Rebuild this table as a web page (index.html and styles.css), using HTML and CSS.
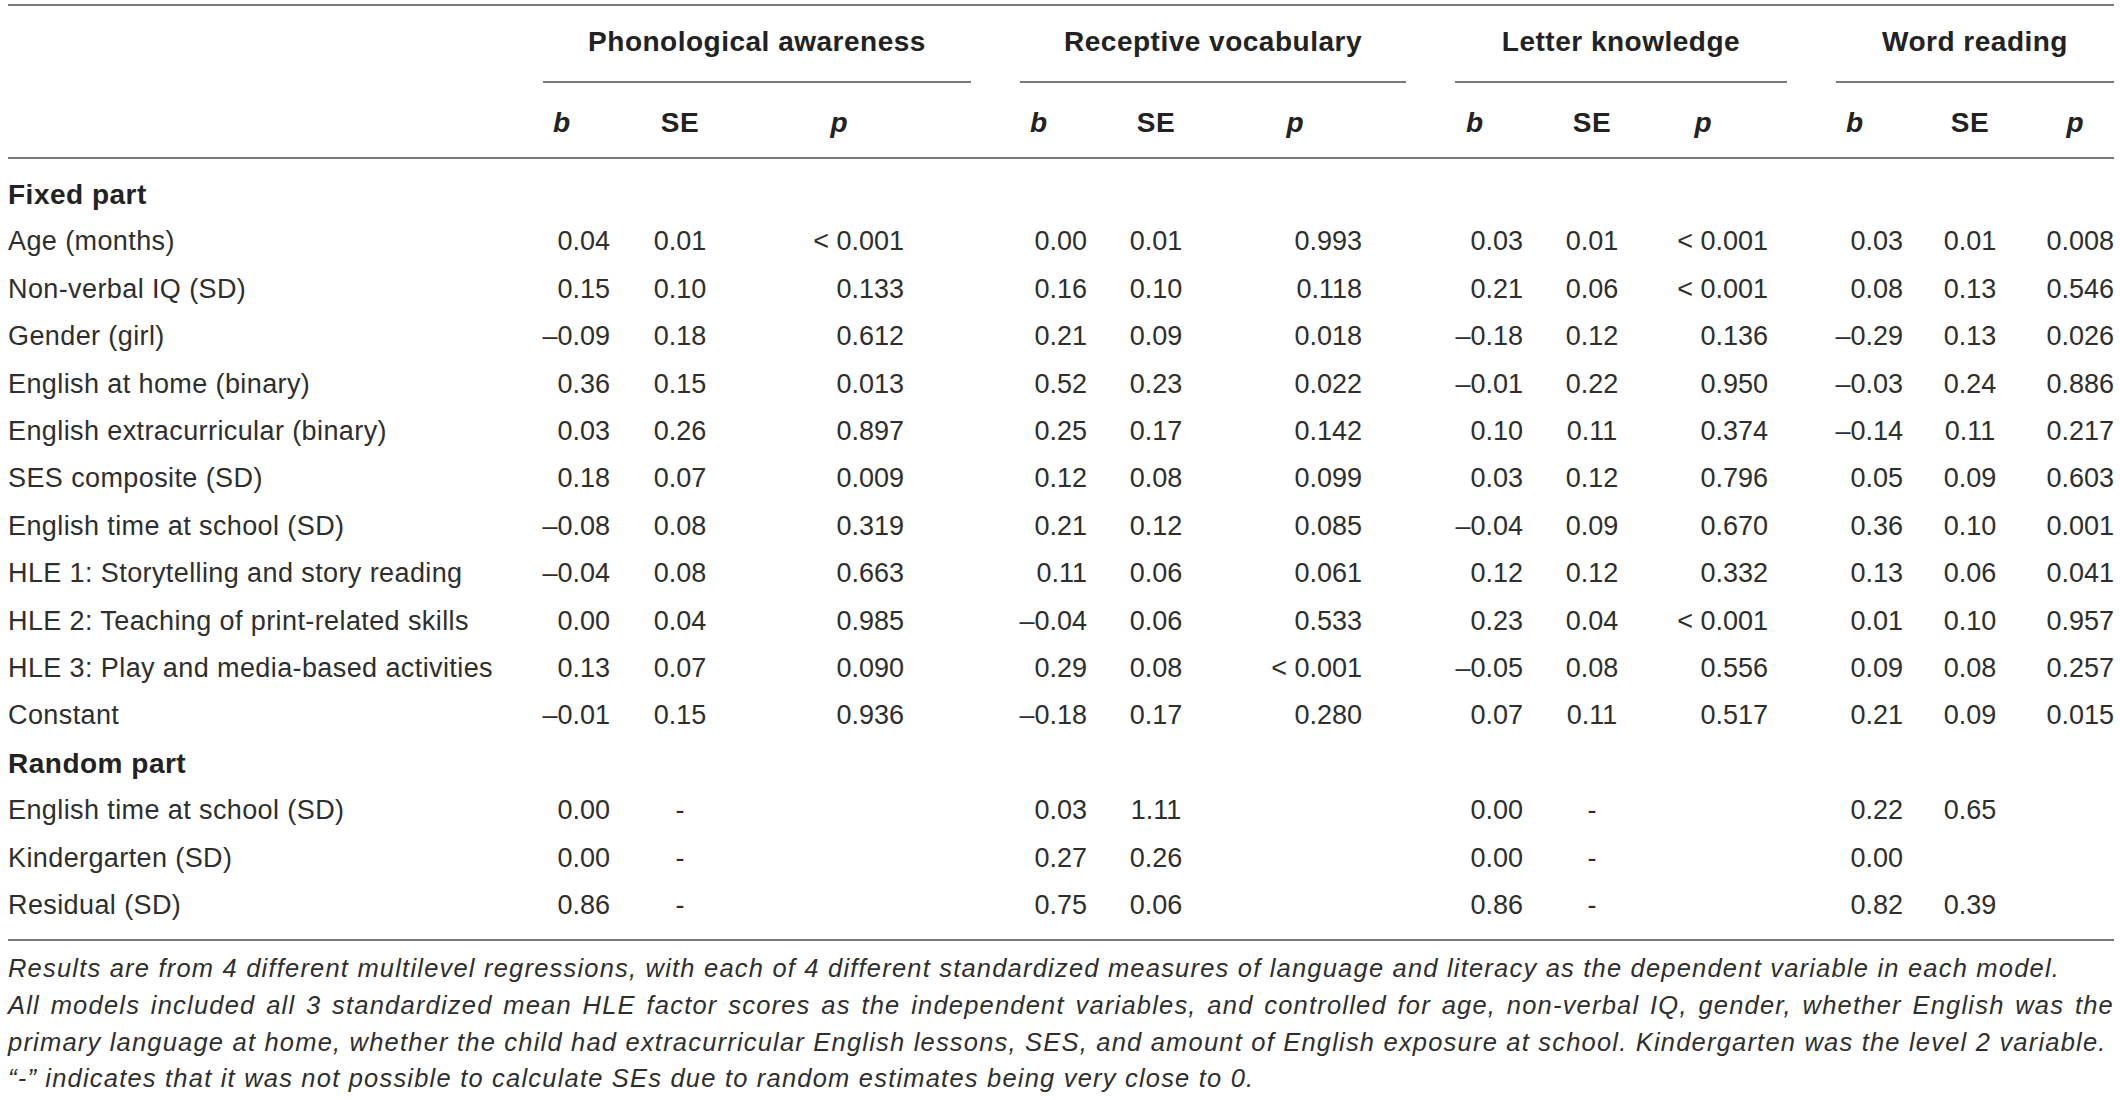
FILE: index.html
```html
<!DOCTYPE html>
<html lang="en">
<head>
<meta charset="utf-8">
<title>Multilevel regression results</title>
<link rel="stylesheet" href="styles.css">
</head>
<body>
<div class="tbl">
  <div class="groups">
    <div></div>
    <div class="grp">Phonological awareness</div>
    <div class="grp">Receptive vocabulary</div>
    <div class="grp">Letter knowledge</div>
    <div class="grp">Word reading</div>
  </div>
  <div class="row sub">
    <div></div>
    <div class="hb g1"><i>b</i></div><div class="hse">SE</div><div class="hp g1"><i>p</i></div>
    <div class="hb g2"><i>b</i></div><div class="hse">SE</div><div class="hp g2"><i>p</i></div>
    <div class="hb g3"><i>b</i></div><div class="hse">SE</div><div class="hp g3"><i>p</i></div>
    <div class="hb g4"><i>b</i></div><div class="hse">SE</div><div class="hp g4"><i>p</i></div>
  </div>
  <div class="body">
    <div class="row"><div class="sect">Fixed part</div></div>
    <div class="row"><div class="lbl">Age (months)</div><div class="n">0.04</div><div class="c">0.01</div><div class="n">&lt; 0.001</div><div class="n">0.00</div><div class="c">0.01</div><div class="n">0.993</div><div class="n">0.03</div><div class="c">0.01</div><div class="n">&lt; 0.001</div><div class="n">0.03</div><div class="c">0.01</div><div class="n">0.008</div></div>
    <div class="row"><div class="lbl">Non-verbal IQ (SD)</div><div class="n">0.15</div><div class="c">0.10</div><div class="n">0.133</div><div class="n">0.16</div><div class="c">0.10</div><div class="n">0.118</div><div class="n">0.21</div><div class="c">0.06</div><div class="n">&lt; 0.001</div><div class="n">0.08</div><div class="c">0.13</div><div class="n">0.546</div></div>
    <div class="row"><div class="lbl">Gender (girl)</div><div class="n">–0.09</div><div class="c">0.18</div><div class="n">0.612</div><div class="n">0.21</div><div class="c">0.09</div><div class="n">0.018</div><div class="n">–0.18</div><div class="c">0.12</div><div class="n">0.136</div><div class="n">–0.29</div><div class="c">0.13</div><div class="n">0.026</div></div>
    <div class="row"><div class="lbl">English at home (binary)</div><div class="n">0.36</div><div class="c">0.15</div><div class="n">0.013</div><div class="n">0.52</div><div class="c">0.23</div><div class="n">0.022</div><div class="n">–0.01</div><div class="c">0.22</div><div class="n">0.950</div><div class="n">–0.03</div><div class="c">0.24</div><div class="n">0.886</div></div>
    <div class="row"><div class="lbl">English extracurricular (binary)</div><div class="n">0.03</div><div class="c">0.26</div><div class="n">0.897</div><div class="n">0.25</div><div class="c">0.17</div><div class="n">0.142</div><div class="n">0.10</div><div class="c">0.11</div><div class="n">0.374</div><div class="n">–0.14</div><div class="c">0.11</div><div class="n">0.217</div></div>
    <div class="row"><div class="lbl">SES composite (SD)</div><div class="n">0.18</div><div class="c">0.07</div><div class="n">0.009</div><div class="n">0.12</div><div class="c">0.08</div><div class="n">0.099</div><div class="n">0.03</div><div class="c">0.12</div><div class="n">0.796</div><div class="n">0.05</div><div class="c">0.09</div><div class="n">0.603</div></div>
    <div class="row"><div class="lbl">English time at school (SD)</div><div class="n">–0.08</div><div class="c">0.08</div><div class="n">0.319</div><div class="n">0.21</div><div class="c">0.12</div><div class="n">0.085</div><div class="n">–0.04</div><div class="c">0.09</div><div class="n">0.670</div><div class="n">0.36</div><div class="c">0.10</div><div class="n">0.001</div></div>
    <div class="row"><div class="lbl">HLE 1: Storytelling and story reading</div><div class="n">–0.04</div><div class="c">0.08</div><div class="n">0.663</div><div class="n">0.11</div><div class="c">0.06</div><div class="n">0.061</div><div class="n">0.12</div><div class="c">0.12</div><div class="n">0.332</div><div class="n">0.13</div><div class="c">0.06</div><div class="n">0.041</div></div>
    <div class="row"><div class="lbl">HLE 2: Teaching of print-related skills</div><div class="n">0.00</div><div class="c">0.04</div><div class="n">0.985</div><div class="n">–0.04</div><div class="c">0.06</div><div class="n">0.533</div><div class="n">0.23</div><div class="c">0.04</div><div class="n">&lt; 0.001</div><div class="n">0.01</div><div class="c">0.10</div><div class="n">0.957</div></div>
    <div class="row"><div class="lbl">HLE 3: Play and media-based activities</div><div class="n">0.13</div><div class="c">0.07</div><div class="n">0.090</div><div class="n">0.29</div><div class="c">0.08</div><div class="n">&lt; 0.001</div><div class="n">–0.05</div><div class="c">0.08</div><div class="n">0.556</div><div class="n">0.09</div><div class="c">0.08</div><div class="n">0.257</div></div>
    <div class="row"><div class="lbl">Constant</div><div class="n">–0.01</div><div class="c">0.15</div><div class="n">0.936</div><div class="n">–0.18</div><div class="c">0.17</div><div class="n">0.280</div><div class="n">0.07</div><div class="c">0.11</div><div class="n">0.517</div><div class="n">0.21</div><div class="c">0.09</div><div class="n">0.015</div></div>
    <div class="row"><div class="sect">Random part</div></div>
    <div class="row"><div class="lbl">English time at school (SD)</div><div class="n">0.00</div><div class="c">-</div><div class="n"></div><div class="n">0.03</div><div class="c">1.11</div><div class="n"></div><div class="n">0.00</div><div class="c">-</div><div class="n"></div><div class="n">0.22</div><div class="c">0.65</div><div class="n"></div></div>
    <div class="row"><div class="lbl">Kindergarten (SD)</div><div class="n">0.00</div><div class="c">-</div><div class="n"></div><div class="n">0.27</div><div class="c">0.26</div><div class="n"></div><div class="n">0.00</div><div class="c">-</div><div class="n"></div><div class="n">0.00</div><div class="c"></div><div class="n"></div></div>
    <div class="row"><div class="lbl">Residual (SD)</div><div class="n">0.86</div><div class="c">-</div><div class="n"></div><div class="n">0.75</div><div class="c">0.06</div><div class="n"></div><div class="n">0.86</div><div class="c">-</div><div class="n"></div><div class="n">0.82</div><div class="c">0.39</div><div class="n"></div></div>
  </div>
  <div class="notes">
    <p>Results are from 4 different multilevel regressions, with each of 4 different standardized measures of language and literacy as the dependent variable in each model.</p>
    <p>All models included all 3 standardized mean HLE factor scores as the independent variables, and controlled for age, non-verbal IQ, gender, whether English was the primary language at home, whether the child had extracurricular English lessons, SES, and amount of English exposure at school. Kindergarten was the level 2 variable.</p>
    <p>“-” indicates that it was not possible to calculate SEs due to random estimates being very close to 0.</p>
  </div>
</div>
</body>
</html>
```

FILE: styles.css
```css
html, body {
  margin: 0;
  padding: 0;
  background: #ffffff;
}

body {
  padding: 4px 6px 0 8px;
  font-family: "Liberation Sans", Arial, Helvetica, sans-serif;
  color: #2e2e2e;
}

.tbl {
  width: 2106px;
  border-top: 2px solid #7a7a7a;
}

.groups {
  display: grid;
  grid-template-columns: 486px 428px 386px 332px 278px;
  column-gap: 49px;
}

.grp {
  padding: 16px 0 19px;
  line-height: 40px;
  font-size: 28px;
  font-weight: bold;
  letter-spacing: 0.5px;
  text-align: center;
  color: #222;
  border-bottom: 2px solid #7a7a7a;
}

.row {
  display: grid;
  grid-template-columns: 522px 80px 140px 154px 183px 138px 137px 161px 138px 107px 135px 134px 77px;
  font-size: 27px;
  line-height: 47.4px;
  white-space: nowrap;
}

.sub {
  padding: 20px 0 14px;
  line-height: 40px;
  font-size: 28px;
  font-weight: bold;
  color: #222;
  border-bottom: 2px solid #7a7a7a;
}

.hb { text-align: left; }
.hb.g1 { padding-left: 23px; }
.hb.g2 { padding-left: 126px; }
.hb.g3 { padding-left: 104px; }
.hb.g4 { padding-left: 78px; }

.hse { text-align: center; letter-spacing: 0.5px; }

.hp { text-align: center; }
.hp.g1 { padding-left: 24px; }
.hp.g2 { padding-left: 3px; }
.hp.g3 { padding-right: 23px; }
.hp.g4 { padding-right: 1px; }

.body {
  padding: 12px 0 9.6px;
  border-bottom: 2px solid #7a7a7a;
}

.sect {
  font-size: 28px;
  font-weight: bold;
  letter-spacing: 0.5px;
  color: #222;
}

.lbl { text-align: left; letter-spacing: 0.4px; }
.n { text-align: right; }
.c { text-align: center; }

.notes {
  padding-top: 9px;
  font-size: 25.5px;
  line-height: 36.7px;
  font-style: italic;
  letter-spacing: 1.2px;
  text-align: justify;
  color: #2e2e2e;
}

.notes p {
  margin: 0;
}
```
